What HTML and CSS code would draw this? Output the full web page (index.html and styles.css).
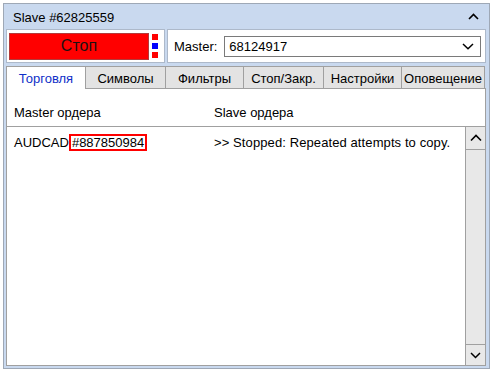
FILE: index.html
```html
<!DOCTYPE html>
<html>
<head>
<meta charset="utf-8">
<link rel="stylesheet" href="styles.css">
</head>
<body>
<div class="window">
  <div class="titlebar">
    <span class="title">Slave #62825559</span>
    <svg class="collapse" width="11" height="7" viewBox="0 0 11 7"><path d="M1 6 L5.5 1.5 L10 6" fill="none" stroke="#000" stroke-width="1.6"/></svg>
  </div>
  <div class="controls">
    <div class="stopbox">
      <div class="stop">Стоп</div>
      <div class="leds"><i class="led red"></i><i class="led blue"></i><i class="led red"></i></div>
    </div>
    <div class="masterbox">
      <span class="mlabel">Master:</span>
      <div class="combo">
        <span>68124917</span>
        <svg width="12" height="7" viewBox="0 0 12 7"><path d="M1 1 L6 5.8 L11 1" fill="none" stroke="#000" stroke-width="1.5"/></svg>
      </div>
    </div>
  </div>
  <div class="tabs">
    <div class="tab active t1">Торговля</div>
    <div class="tab t2">Символы</div>
    <div class="tab t3">Фильтры</div>
    <div class="tab t4">Стоп/Закр.</div>
    <div class="tab t5">Настройки</div>
    <div class="tab t6">Оповещение</div>
    <div class="tabfill"></div>
  </div>
  <div class="content">
    <div class="head"><span class="col1">Master ордера</span><span>Slave ордера</span></div>
    <div class="list">
      <div class="rows">
        <div class="row"><span class="col1">AUDCAD<span class="ticket">#887850984</span></span><span class="msg">&gt;&gt; Stopped: Repeated attempts to copy.</span></div>
      </div>
      <div class="scrollbar">
        <div class="sbtn up"><svg width="12" height="8" viewBox="0 0 12 8"><path d="M1 6.5 L6 1.5 L11 6.5" fill="none" stroke="#000" stroke-width="1.6"/></svg></div>
        <div class="track"></div>
        <div class="sbtn down"><svg width="11" height="7" viewBox="0 0 11 7"><path d="M1 1 L5.5 5.5 L10 1" fill="none" stroke="#000" stroke-width="1.5"/></svg></div>
      </div>
    </div>
  </div>
</div>
</body>
</html>
```

FILE: styles.css
```css
* { box-sizing: border-box; }
html, body { margin: 0; padding: 0; background: #ffffff; }
body {
  font-family: "Liberation Sans", Arial, sans-serif;
  font-size: 13px;
  color: #000;
}
.window {
  margin: 3px 0 0 3px;
  width: 487px;
  height: 366px;
  border: 1px solid #9ea8b6;
  background: #c9d9ef;
  padding: 0 3px 2px 2px;
  display: flex;
  flex-direction: column;
}
.titlebar {
  height: 25px;
  flex: none;
  display: flex;
  align-items: center;
  justify-content: space-between;
  padding: 2px 7px 0 7px;
  line-height: 15px;
}
.collapse { display: block; margin-top: -2px; }
.controls {
  height: 34px;
  flex: none;
  display: flex;
  gap: 2px;
  margin-bottom: 3px;
}
.stopbox {
  width: 159px;
  background: #fff;
  border: 1px solid #adb9ca;
  padding: 3px 2px;
  display: flex;
  align-items: center;
}
.stop {
  width: 140px;
  height: 27px;
  background: #ff0000;
  border: 1px solid #b33a3a;
  display: flex;
  align-items: center;
  justify-content: center;
  font-size: 16px;
  color: #1c1010;
}
.leds {
  margin-left: 3px;
  display: flex;
  flex-direction: column;
  gap: 3px;
}
.led { display: block; width: 6px; height: 6px; }
.led.red { background: #ff0000; }
.led.blue { background: #0000ff; }
.masterbox {
  flex: 1;
  background: #fff;
  border: 1px solid #adb9ca;
  padding: 0 4px 0 6px;
  display: flex;
  align-items: center;
  gap: 7px;
}
.combo {
  flex: 1;
  height: 21px;
  border: 1px solid #7a7a7a;
  display: flex;
  align-items: center;
  justify-content: space-between;
  padding: 0 6px 0 4px;
}
.combo svg { display: block; }
.tabs {
  height: 23px;
  flex: none;
  display: flex;
}
.tab {
  height: 23px;
  border-top: 1px solid #a0a0a0;
  border-left: 1px solid #a0a0a0;
  border-bottom: 1px solid #a0a0a0;
  background: #e3e3e3;
  display: flex;
  align-items: center;
  justify-content: center;
  padding-top: 1px;
  white-space: nowrap;
}
.tab.active {
  background: #fff;
  border-bottom: none;
  color: #1030c8;
}
.t1 { width: 79px; }
.t2 { width: 80px; }
.t3 { width: 78px; }
.t4 { width: 80px; }
.t5 { width: 78px; }
.t6 { width: 84px; border-right: 1px solid #a0a0a0; }
.tabfill { flex: 1; border-bottom: 1px solid #a0a0a0; }
.content {
  flex: 1;
  background: #fff;
  border: 1px solid #a0a0a0;
  border-top: none;
  display: flex;
  flex-direction: column;
}
.head {
  height: 37px;
  flex: none;
  padding: 16px 0 0 7px;
  line-height: 15px;
  display: flex;
}
.col1 { width: 200px; flex: none; white-space: nowrap; }
.list {
  flex: 1;
  border-top: 1px solid #a0a0a0;
  display: flex;
}
.rows {
  flex: 1;
  padding: 7px 0 0 7px;
}
.row {
  display: flex;
  height: 17px;
  align-items: center;
  line-height: 13px;
  white-space: nowrap;
}
.msg { letter-spacing: 0.1px; }
.ticket {
  border: 2px solid #ff0000;
  padding: 0 1px 0 1px;
  line-height: 13px;
  display: inline-block;
}
.scrollbar {
  width: 20px;
  flex: none;
  border-left: 1px solid #a0a0a0;
  background: #e8e8e8;
  display: flex;
  flex-direction: column;
}
.sbtn {
  display: flex;
  align-items: center;
  justify-content: center;
  background: #e8e8e8;
}
.sbtn svg { display: block; }
.sbtn.up { height: 23px; border-bottom: 1px solid #a0a0a0; }
.sbtn.down { height: 21px; border-top: 1px solid #a0a0a0; }
.track { flex: 1; }
```
